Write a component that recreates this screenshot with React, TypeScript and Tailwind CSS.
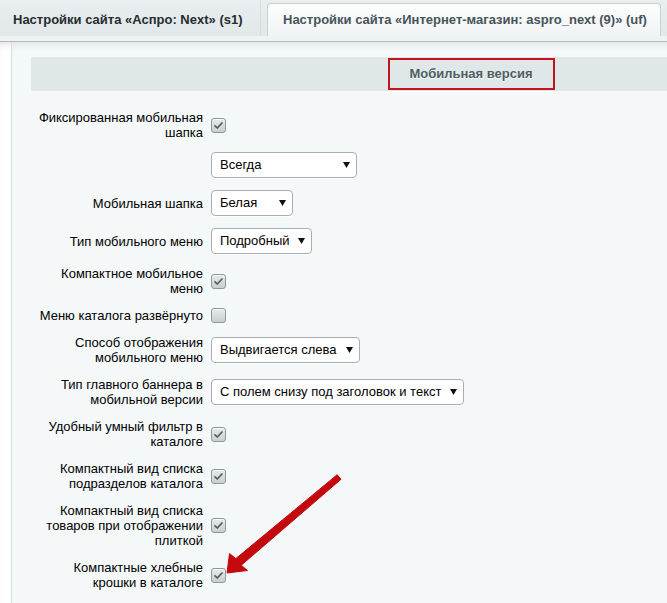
import React from 'react';

type Row =
  | { label: string[]; kind: 'check'; checked: boolean }
  | { label: string[]; kind: 'select'; value: string; width: string };

const rows: Row[] = [
  { label: ['Фиксированная мобильная', 'шапка'], kind: 'check', checked: true },
  { label: [], kind: 'select', value: 'Всегда', width: 'w-[146px]' },
  { label: ['Мобильная шапка'], kind: 'select', value: 'Белая', width: 'w-[82px]' },
  { label: ['Тип мобильного меню'], kind: 'select', value: 'Подробный', width: 'w-[101px]' },
  { label: ['Компактное мобильное', 'меню'], kind: 'check', checked: true },
  { label: ['Меню каталога развёрнуто'], kind: 'check', checked: false },
  { label: ['Способ отображения', 'мобильного меню'], kind: 'select', value: 'Выдвигается слева', width: 'w-[149px]' },
  { label: ['Тип главного баннера в', 'мобильной версии'], kind: 'select', value: 'С полем снизу под заголовок и текст', width: 'w-[253px]' },
  { label: ['Удобный умный фильтр в', 'каталоге'], kind: 'check', checked: true },
  { label: ['Компактный вид списка', 'подразделов каталога'], kind: 'check', checked: true },
  { label: ['Компактный вид списка', 'товаров при отображении', 'плиткой'], kind: 'check', checked: true },
  { label: ['Компактные хлебные', 'крошки в каталоге'], kind: 'check', checked: true },
];

const Checkbox = ({ checked }: { checked: boolean }) => (
  <div className="w-[15px] h-[15px] rounded-[3px] border border-[#8f979a] bg-gradient-to-b from-[#e6eaeb] to-[#c9cfd1] shadow-[inset_0_1px_0_#f7f9f9] flex items-center justify-center">
    {checked && (
      <svg width="11" height="11" viewBox="0 0 11 11">
        <path d="M2 5.8 L4.3 8 L9 3" fill="none" stroke="#535b5e" strokeWidth="1.7" strokeLinecap="round" strokeLinejoin="round" />
      </svg>
    )}
  </div>
);

const Select = ({ value, width }: { value: string; width: string }) => (
  <div
    className={`${width} h-[26px] rounded-[4px] border border-[#a7afb2] bg-white shadow-[0_1px_0_#fff] flex items-center justify-between pl-[8px] pr-[6px] text-black`}
  >
    <span className="whitespace-nowrap">{value}</span>
    <svg width="7" height="6" viewBox="0 0 7 6">
      <polygon points="0,0 7,0 3.5,6" fill="#111" />
    </svg>
  </div>
);

export default function App() {
  return (
    <div className="relative w-[667px] h-[603px] overflow-hidden bg-white font-['Liberation_Sans',Arial,sans-serif] text-[13px]">
      {/* tab strip */}
      <div className="h-[36px] bg-gradient-to-b from-[#e9eef0] to-[#e1e8ea] flex">
        <div className="w-[260px] h-full flex items-center pl-[13px] pt-[3px] font-bold text-[#262b2d] whitespace-nowrap">
          Настройки сайта «Аспро: Next» (s1)
        </div>
        <div className="h-full border-l border-[#d3dbde] pl-[6px] pt-[3px]">
          <div className="w-[394px] h-full rounded-t-[4px] border border-b-0 border-[#c8d0d3] bg-gradient-to-b from-[#fdfdfd] to-[#f0f3f4] flex items-center pl-[15px] font-bold text-[#46545a] whitespace-nowrap">
            Настройки сайта «Интернет-магазин: aspro_next (9)» (uf)
          </div>
        </div>
      </div>
      <div className="h-[6px] bg-[#eff2f3] border-b border-[#b1b9bc]" />

      {/* settings panel */}
      <div className="flex h-full shadow-[inset_0_6px_6px_-3px_rgba(0,0,0,0.10)]">
        <div className="w-[11px] shrink-0" />
        <div className="flex-1 border-l border-[#d8dfe1] bg-[#f5f8f9] pl-[19px] pt-[15px] shadow-[inset_0_6px_6px_-3px_rgba(0,0,0,0.08)]">
          <div className="w-[880px]">
            <div className="h-[34px] bg-[#e0e7e9] flex items-center justify-center">
              <div className="h-[32px] w-[167px] border-2 border-[#c4141b] flex items-center justify-center font-bold text-[#4a5d62] [text-shadow:0_1px_0_#fff]">
                Мобильная версия
              </div>
            </div>

            <div className="mt-[13px] flex flex-col">
              {rows.map((row, i) => (
                <div key={i} className="flex items-center py-[6px]">
                  <div className="w-[180px] shrink-0 pr-[8px] text-right leading-[15px] text-black whitespace-nowrap">
                    {row.label.map((line, j) => (
                      <div key={j}>{line}</div>
                    ))}
                  </div>
                  {row.kind === 'check' ? (
                    <Checkbox checked={row.checked} />
                  ) : (
                    <Select value={row.value} width={row.width} />
                  )}
                </div>
              ))}
            </div>
          </div>
        </div>
      </div>

      {/* red pointer arrow */}
      <svg className="absolute inset-0 pointer-events-none" width="667" height="603" viewBox="0 0 667 603">
        <polygon
          points="227,573 229.5,553.5 235.8,558.6 337.2,474.7 341,479.3 241.3,565.2 247.5,570.5"
          fill="#c3090d"
          stroke="#c3090d"
          strokeWidth="1"
          strokeLinejoin="round"
        />
      </svg>
    </div>
  );
}
